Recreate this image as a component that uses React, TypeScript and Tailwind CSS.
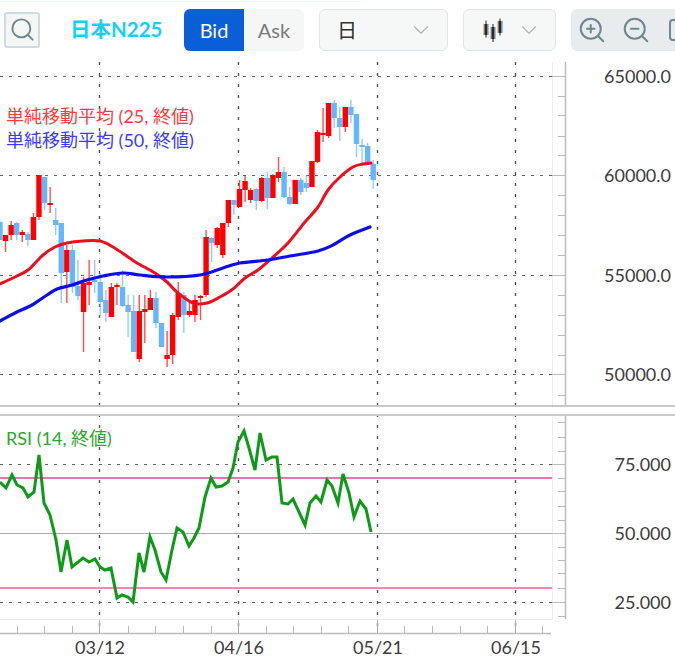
import { ChevronDown, Search, ZoomIn, ZoomOut } from 'lucide-react';

// [bodyTop, bodyBottom, wickTop, wickBottom, up]
const candles: [number, number, number, number, boolean][] = [
  [222, 240, 221, 240, false],
  [235, 241, 235, 252, true],
  [225, 235, 221, 240, true],
  [223, 235, 222, 240, false],
  [232, 235, 230, 242, true],
  [234, 240, 232, 246, false],
  [217, 240, 213, 240, true],
  [175, 217, 175, 220, true],
  [177, 203, 177, 210, false],
  [203, 205, 187, 213, true],
  [220, 225, 208, 235, false],
  [223, 273, 223, 303, false],
  [250, 272, 245, 303, true],
  [250, 287, 245, 293, false],
  [286, 296, 260, 300, false],
  [283, 312, 277, 352, true],
  [282, 285, 260, 305, true],
  [280, 282, 260, 293, false],
  [282, 302, 273, 316, false],
  [300, 313, 290, 322, false],
  [287, 317, 283, 317, true],
  [285, 287, 283, 305, true],
  [287, 306, 270, 307, false],
  [305, 312, 295, 337, false],
  [311, 352, 295, 352, false],
  [311, 359, 295, 362, true],
  [309, 312, 295, 343, true],
  [298, 310, 290, 310, true],
  [298, 323, 292, 328, false],
  [323, 347, 323, 347, false],
  [355, 359, 331, 367, true],
  [315, 355, 313, 364, true],
  [293, 317, 282, 320, true],
  [295, 315, 292, 333, false],
  [311, 315, 300, 317, true],
  [300, 315, 295, 322, true],
  [296, 298, 295, 320, true],
  [237, 295, 230, 297, true],
  [238, 243, 237, 262, false],
  [228, 245, 227, 248, true],
  [223, 255, 223, 258, true],
  [200, 223, 200, 227, true],
  [200, 205, 200, 215, false],
  [189, 207, 180, 207, true],
  [181, 190, 175, 202, true],
  [190, 200, 188, 203, true],
  [189, 201, 188, 210, false],
  [178, 201, 177, 202, true],
  [178, 198, 172, 209, false],
  [175, 198, 174, 198, true],
  [172, 178, 157, 182, true],
  [172, 197, 167, 198, false],
  [197, 204, 187, 205, false],
  [180, 204, 180, 204, true],
  [180, 192, 178, 195, false],
  [183, 188, 175, 192, false],
  [161, 187, 161, 187, true],
  [132, 162, 130, 163, true],
  [133, 135, 108, 142, true],
  [103, 136, 103, 138, true],
  [103, 118, 100, 128, false],
  [118, 127, 107, 141, false],
  [107, 127, 107, 132, true],
  [107, 115, 100, 123, false],
  [114, 144, 114, 157, false],
  [145, 147, 139, 164, false],
  [146, 163, 143, 163, false],
  [164, 180, 160, 189, false],
];

const ma25: [number, number][] = [
  [0, 284], [15, 277], [28, 270], [43, 255], [55, 247], [67, 243], [83, 241], [100, 241], [113, 247], [128, 257],
  [137, 263], [155, 273], [167, 282], [177, 292], [193, 303], [207, 303], [220, 297], [233, 289], [245, 278],
  [258, 270], [272, 258], [288, 243], [305, 222], [318, 207], [328, 190], [340, 177], [353, 167], [363, 164], [371, 163],
];
const ma50: [number, number][] = [
  [0, 321], [15, 313], [32, 305], [47, 295], [57, 289], [72, 285], [87, 280], [103, 276], [123, 273], [140, 275],
  [167, 277], [200, 275], [223, 268], [240, 263], [268, 260], [290, 256], [318, 251], [333, 245], [350, 235], [370, 227],
];
const rsi =
  '0,482 6,488 12,475 17,485 23,488 28,497 34,492 39,455 44,503 50,515 56,540 61,572 67,540 72,567 83,558 89,562 95,559 100,567 105,570 111,568 117,598 122,595 128,597 133,602 139,553 144,572 150,537 155,550 161,572 166,580 172,550 177,528 183,532 189,546 194,538 199,528 205,497 211,478 216,487 222,486 228,482 233,468 238,442 244,431 249,448 255,470 260,433 266,460 272,457 277,457 282,503 288,504 293,499 299,512 305,525 310,503 316,496 321,502 327,480 332,486 338,503 343,474 349,493 354,517 360,501 366,509 371,532';

const gridX = [99, 238, 377, 515];
const gridY = [76, 175, 275, 374, 464, 602];
const priceLabels: [string, number][] = [
  ['65000.0', 76],
  ['60000.0', 175],
  ['55000.0', 275],
  ['50000.0', 374],
  ['75.000', 464],
  ['50.000', 533],
  ['25.000', 602],
];
const minorY = [96, 115, 136, 155, 195, 215, 235, 255, 295, 315, 335, 355, 395, 422, 437, 451, 478, 491, 506, 520, 547, 560, 573, 588, 616];
const timeTicks = [17, 44, 72, 128, 155, 183, 211, 266, 293, 321, 348, 404, 432, 460, 487, 542];
const dates: [string, number][] = [
  ['03/12', 99],
  ['04/16', 238],
  ['05/21', 377],
  ['06/15', 515],
];

// smooth line through the points, the moving averages have no visible corners
function smooth(pts: [number, number][]) {
  let d = `M${pts[0][0]},${pts[0][1]}`;
  for (let i = 0; i < pts.length - 1; i++) {
    const p0 = pts[Math.max(i - 1, 0)];
    const p1 = pts[i];
    const p2 = pts[i + 1];
    const p3 = pts[Math.min(i + 2, pts.length - 1)];
    const c1x = p1[0] + (p2[0] - p0[0]) / 6;
    const c1y = p1[1] + (p2[1] - p0[1]) / 6;
    const c2x = p2[0] - (p3[0] - p1[0]) / 6;
    const c2y = p2[1] - (p3[1] - p1[1]) / 6;
    d += `C${c1x},${c1y} ${c2x},${c2y} ${p2[0]},${p2[1]}`;
  }
  return d;
}

function CandleIcon() {
  return (
    <svg width="20" height="24" viewBox="0 0 20 24" fill="none">
      <path d="M3 2.500v17M10 6v18M17 0.500v17" stroke="#222" strokeWidth="1" />
      <rect x="0.500" y="6" width="1" height="11" fill="#e8902e" />
      <rect x="1.500" y="6" width="3" height="11" fill="#2a2a2a" />
      <rect x="4.500" y="6" width="1" height="11" fill="#3d8fe0" />
      <rect x="7.500" y="9" width="1" height="12" fill="#e8902e" />
      <rect x="8.500" y="9" width="3" height="12" fill="#2a2a2a" />
      <rect x="11.500" y="9" width="1" height="12" fill="#3d8fe0" />
      <rect x="14.500" y="3" width="1" height="12" fill="#e8902e" />
      <rect x="15.500" y="3" width="3" height="12" fill="#2a2a2a" />
      <rect x="18.500" y="3" width="1" height="12" fill="#3d8fe0" />
    </svg>
  );
}

function Chart() {
  return (
    <svg width="675" height="606" viewBox="0 58 675 606" className="block" fontFamily="Lato, sans-serif">
      <defs>
        <filter id="soft" x="-5%" y="-5%" width="110%" height="110%">
          <feGaussianBlur stdDeviation="0.450" />
        </filter>
      </defs>

      {/* dotted grid */}
      {gridX.map((x) => (
        <line key={x} x1={x + 0.5} y1="62" x2={x + 0.5} y2="632" stroke="#555" strokeWidth="1.400" strokeDasharray="3 8" />
      ))}
      {gridY.map((y) => (
        <line key={y} x1="0" y1={y + 0.5} x2="552" y2={y + 0.5} stroke="#666" strokeWidth="1.200" strokeDasharray="3 6" />
      ))}

      {/* RSI guide lines */}
      <line x1="0" y1="478" x2="552" y2="478" stroke="#f46fae" strokeWidth="2.200" />
      <line x1="0" y1="588" x2="552" y2="588" stroke="#f784bb" strokeWidth="2.200" />
      <line x1="0" y1="533.500" x2="565" y2="533.500" stroke="#aaa" strokeWidth="1" />

      <g filter="url(#soft)">
        {/* candles */}
        {candles.map(([top, bottom, wickTop, wickBottom, up], i) => {
          const x = i * 5.57;
          const color = up ? '#ff0000' : '#66b5ff';
          return (
            <g key={i}>
              <line x1={x} y1={wickTop} x2={x} y2={wickBottom} stroke={color} strokeWidth="1.400" opacity="0.7" />
              <rect x={x - 2.7} y={top} width="5.400" height={bottom - top} fill={color} />
            </g>
          );
        })}

        {/* moving averages */}
        <path d={smooth(ma25)} fill="none" stroke="#ee0f1c" strokeWidth="3" strokeLinecap="round" />
        <path d={smooth(ma50)} fill="none" stroke="#0f0fe6" strokeWidth="3.200" strokeLinecap="round" />
        <polyline points={rsi} fill="none" stroke="#0f9a18" strokeWidth="3" strokeLinejoin="miter" />
      </g>

      {/* panel separators */}
      <line x1="0" y1="406" x2="675" y2="406" stroke="#c8c8c8" strokeWidth="2" />
      <line x1="0" y1="415" x2="675" y2="415" stroke="#c8c8c8" strokeWidth="2" />

      {/* price axis */}
      <line x1="552.500" y1="62" x2="552.500" y2="405" stroke="#eeeeee" />
      <line x1="552.500" y1="416" x2="552.500" y2="619" stroke="#eeeeee" />
      <line x1="565.500" y1="62" x2="565.500" y2="405" stroke="#bbb" strokeWidth="1.500" />
      <line x1="565.500" y1="416" x2="565.500" y2="619" stroke="#bbb" strokeWidth="1.500" />
      {minorY.map((y) => (
        <line key={y} x1="558" y1={y + 0.5} x2="565" y2={y + 0.5} stroke="#bbb" />
      ))}
      {[76, 175, 275, 374, 464, 533, 602].map((y) => (
        <line key={y} x1="552" y1={y + 0.5} x2="565" y2={y + 0.5} stroke="#bbb" />
      ))}
      {priceLabels.map(([label, y]) => (
        <text key={label} x="671" y={y + 7} textAnchor="end" fontSize="18" fill="#3c3c3c">
          {label}
        </text>
      ))}

      {/* time axis */}
      <line x1="0" y1="619.500" x2="552" y2="619.500" stroke="#eeeeee" />
      <line x1="0" y1="633.500" x2="551" y2="633.500" stroke="#bbb" strokeWidth="1.500" />
      {timeTicks.map((x) => (
        <line key={x} x1={x + 0.5} y1="626" x2={x + 0.5} y2="633" stroke="#bbb" />
      ))}
      {dates.map(([label, x]) => (
        <g key={label}>
          <line x1={x + 0.5} y1="620" x2={x + 0.5} y2="633" stroke="#aaa" />
          <text x={x + 1} y="654" textAnchor="middle" fontSize="18" fill="#3c3c3c">
            {label}
          </text>
        </g>
      ))}
    </svg>
  );
}

export default function App() {
  return (
    <div className="w-[675px] h-[664px] overflow-hidden bg-white font-['Lato','Noto_Sans_CJK_JP',sans-serif]">
      <div className="w-[360px] h-[2px] border-b border-[#eefafa]" />
      <div className="flex items-center h-[56px] pl-1 pb-[1px] whitespace-nowrap">
        <button className="w-9 h-9 shrink-0 flex items-center justify-center rounded-[3px] border-2 border-[#cfdde3] bg-[#f5f7f7]">
          <Search size={27} strokeWidth={1.700} color="#6f8790" />
        </button>
        <span className="w-[94px] ml-[30px] shrink-0 text-[20.500px] font-bold text-[#12d0fb]">日本N225</span>
        <div className="ml-5 flex h-[42px] w-[120px] shrink-0 rounded-[6px] overflow-hidden text-[20px]">
          <span className="w-[60px] flex items-center justify-center bg-[#0a5fd9] text-white">Bid</span>
          <span className="w-[60px] flex items-center justify-center bg-[#f5f6f6] text-[#7b7b7b]">Ask</span>
        </div>
        <div className="ml-[15px] flex items-center h-[42px] w-[129px] shrink-0 pl-[17px] pr-[13px] justify-between rounded-[6px] border border-[#dde6e9] bg-[#f6f7f7] text-[20px] text-[#333]">
          <span>日</span>
          <ChevronDown size={26} strokeWidth={1.200} color="#b5b5b5" />
        </div>
        <div className="ml-[15px] flex items-center h-[42px] w-[93px] shrink-0 pl-[19px] pr-[13px] justify-between rounded-[6px] border border-[#dde6e9] bg-[#f6f7f7]">
          <CandleIcon />
          <ChevronDown size={26} strokeWidth={1.200} color="#b5b5b5" />
        </div>
        <div className="ml-[15px] flex items-center h-[42px] w-[140px] shrink-0 pl-[6px] gap-[14px] rounded-[6px] bg-[#e8ecec]">
          <ZoomIn size={30} strokeWidth={1.600} color="#6f8790" />
          <ZoomOut size={30} strokeWidth={1.600} color="#6f8790" />
          <div className="ml-1 w-[20px] h-[22px] shrink-0 rounded-[4px] border-2 border-[#6f8790]" />
        </div>
      </div>
      <div className="relative">
        <Chart />
        <div className="absolute left-[6px] top-[46px] text-[18px] leading-[24px] text-[#ff3a3a]">
          単純移動平均 (25, 終値)
        </div>
        <div className="absolute left-[6px] top-[70px] text-[18px] leading-[24px] text-[#3a3aff]">
          単純移動平均 (50, 終値)
        </div>
        <div className="absolute left-[6px] top-[368px] text-[18px] leading-[24px] text-[#2ca82c]">
          RSI (14, 終値)
        </div>
      </div>
    </div>
  );
}
